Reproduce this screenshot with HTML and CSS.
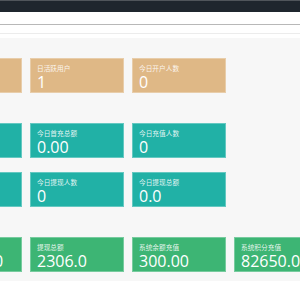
FILE: index.html
```html
<!DOCTYPE html>
<html lang="zh-CN">

<head>
    <meta charset="UTF-8">
    <meta name="viewport" content="width=device-width, initial-scale=1.0">
    <title>控制台</title>

    <link rel="stylesheet" href="styles.css">
</head>

<body>
    <header class="topbar"></header>
    <div class="toolbar">
        <div class="search-line"></div>
        <div class="tab-line"></div>
    </div>

    <main class="content">
        <section class="stats">
            <div class="card tan">
                <div class="label">总注册用户</div>
                <div class="value">1</div>
            </div>
            <div class="card tan">
                <div class="label">日活跃用户</div>
                <div class="value">1</div>
            </div>
            <div class="card tan">
                <div class="label">今日开户人数</div>
                <div class="value">0</div>
            </div>
        </section>

        <section class="stats">
            <div class="card teal">
                <div class="label">今日充值总额</div>
                <div class="value">0.00</div>
            </div>
            <div class="card teal">
                <div class="label">今日首充总额</div>
                <div class="value">0.00</div>
            </div>
            <div class="card teal">
                <div class="label">今日充值人数</div>
                <div class="value">0</div>
            </div>
            <div class="card teal new-row">
                <div class="label">今日首充人数</div>
                <div class="value">0</div>
            </div>
            <div class="card teal">
                <div class="label">今日提现人数</div>
                <div class="value">0</div>
            </div>
            <div class="card teal">
                <div class="label">今日提现总额</div>
                <div class="value">0.0</div>
            </div>
        </section>

        <section class="stats">
            <div class="card green">
                <div class="label">充值总额</div>
                <div class="value">18200.00</div>
            </div>
            <div class="card green">
                <div class="label">提现总额</div>
                <div class="value">2306.0</div>
            </div>
            <div class="card green">
                <div class="label">系统余额充值</div>
                <div class="value">300.00</div>
            </div>
            <div class="card green">
                <div class="label">系统积分充值</div>
                <div class="value">82650.0</div>
            </div>
        </section>
    </main>
</body>

</html>
```

FILE: styles.css
```css
html,
body {
    padding: 0;
    margin: 0;
}

* {
    box-sizing: border-box;
}

body {
    width: 300px;
    height: 300px;
    overflow: hidden;
    background-color: #ffffff;
    font-family: "Open Sans", "Noto Sans CJK SC", sans-serif;
}

.topbar {
    height: 12px;
    background-color: #1f262e;
    border-top: 1px solid #50555b;
}

.toolbar {
    height: 26px;
    background-color: #ffffff;
    padding-top: 12px;
}

.search-line {
    height: 1px;
    background-color: #b8b8b8;
}

.tab-line {
    height: 1px;
    margin-top: 8px;
    background-color: #ececec;
}

.content {
    background-color: #f7f7f7;
    padding: 20px 0 9px;
    display: flex;
    flex-direction: column;
    gap: 30px;
}

.stats {
    margin-left: -72px;
    display: grid;
    grid-template-columns: repeat(4, 94px);
    column-gap: 8px;
    row-gap: 14px;
    overflow: hidden;
}

.new-row {
    grid-column: 1;
}

.card {
    height: 35px;
    padding: 5px 6px 0;
    color: #ffffff;
    border: 1px solid rgba(255, 255, 255, 0.3);
    overflow: hidden;
}

.tan {
    background-color: #dfb886;
}

.teal {
    background-color: #21b1a6;
}

.green {
    background-color: #3db574;
}

.label {
    font-family: "Noto Sans CJK SC", sans-serif;
    font-size: 6.7px;
    line-height: 9px;
    color: rgba(255, 255, 255, 0.88);
    white-space: nowrap;
}

.value {
    font-size: 16px;
    line-height: 18px;
    white-space: nowrap;
}
```
